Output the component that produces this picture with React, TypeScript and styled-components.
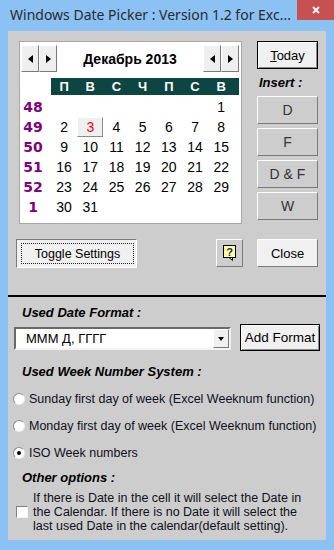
import React from "react";
import styled, { createGlobalStyle } from "styled-components";

const GlobalStyle = createGlobalStyle`
  body {
    margin: 0;
    font-family: "Liberation Sans", Arial, sans-serif;
  }
`;

const Window = styled.div`
  width: 334px;
  height: 550px;
  background: #8bc1f3;
  display: flex;
  flex-direction: column;
  box-sizing: border-box;
`;

const TitleBar = styled.div`
  height: 31px;
  display: flex;
  align-items: flex-start;
`;

const TitleText = styled.div`
  flex: 1;
  padding: 5px 0 0 10px;
  font-family: "Noto Sans", sans-serif;
  font-size: 14px;
  color: #2b2b2b;
  white-space: nowrap;
  overflow: hidden;
`;

const CloseX = styled.div`
  width: 37px;
  height: 20px;
  background: #c75050;
  display: flex;
  align-items: center;
  justify-content: center;
`;

const Client = styled.div`
  flex: 1;
  margin: 0 8px 10px 8px;
  background: #cdcdcd;
  display: flex;
  flex-direction: column;
`;

const TopPane = styled.div`
  padding: 10px 8px 27px 8px;
`;

const TopRow = styled.div`
  display: flex;
  align-items: flex-start;
`;

const CalendarBox = styled.div`
  width: 223px;
  height: 183px;
  box-sizing: border-box;
  margin-left: 3px;
  background: #fff;
  border: 1px solid #a8a8a8;
  padding: 3px 2px 0 1px;
`;

const NavRow = styled.div`
  display: flex;
  align-items: center;
  height: 27px;
`;

const NavPair = styled.div`
  display: flex;
`;

const NavButton = styled.div`
  width: 18px;
  height: 27px;
  box-sizing: border-box;
  background: #efefef;
  border: 1px solid;
  border-color: #fff #7a7a7a #7a7a7a #fff;
  display: flex;
  align-items: center;
  justify-content: center;
`;

const Arrow = styled.span<{ $dir: "left" | "right" }>`
  width: 0;
  height: 0;
  border-top: 4.5px solid transparent;
  border-bottom: 4.5px solid transparent;
  ${({ $dir }) =>
    $dir === "left"
      ? "border-right: 5px solid #000;"
      : "border-left: 5px solid #000;"}
`;

const MonthTitle = styled.div`
  flex: 1;
  text-align: center;
  font-weight: bold;
  font-size: 14px;
  color: #000;
`;

const HeaderBar = styled.div`
  margin: 6px 0 0 30px;
  width: 188px;
  height: 17px;
  background: #0c4542;
  display: grid;
  grid-template-columns: repeat(7, 26.2px);
  align-items: center;
`;

const HeaderCell = styled.div`
  text-align: center;
  color: #fff;
  font-weight: bold;
  font-size: 13px;
`;

const DayGrid = styled.div`
  margin-top: 2px;
  display: grid;
  grid-template-columns: 30px repeat(7, 26.2px);
  grid-auto-rows: 20px;
`;

const WeekNo = styled.div`
  font-family: "DejaVu Sans", sans-serif;
  font-weight: bold;
  font-size: 14px;
  color: #800080;
  text-align: center;
  padding-right: 6px;
  line-height: 20px;
`;

const Day = styled.div<{ $selected?: boolean }>`
  font-size: 14px;
  line-height: 18px;
  text-align: center;
  box-sizing: border-box;
  color: ${({ $selected }) => ($selected ? "#ff0000" : "#000")};
  border: 1px solid;
  border-color: ${({ $selected }) =>
    $selected ? "#fff #8a8a8a #8a8a8a #fff" : "transparent"};
  background: ${({ $selected }) => ($selected ? "#f0f0f0" : "transparent")};
`;

const SideColumn = styled.div`
  width: 61px;
  margin-left: 15px;
  display: flex;
  flex-direction: column;
`;

const Button = styled.div<{ $tone?: "light" | "grey" }>`
  box-sizing: border-box;
  display: flex;
  align-items: center;
  justify-content: center;
  font-size: 12.5px;
  color: ${({ $tone }) => ($tone === "grey" ? "#333" : "#000")};
  background: ${({ $tone }) => ($tone === "grey" ? "#cdcdcd" : "#f0f0f0")};
  border: 1px solid;
  border-color: #fff #7a7a7a #7a7a7a #fff;
`;

const DefaultButton = styled(Button)`
  border: 1px solid #000;
  box-shadow: inset 1px 1px 0 #fff, inset -1px -1px 0 #8a8a8a;
`;

const TodayButton = styled(DefaultButton)`
  height: 28px;
  font-size: 13px;
`;

const InsertLabel = styled.div`
  height: 27px;
  display: flex;
  align-items: center;
  padding-left: 2px;
  font-size: 13px;
  font-weight: bold;
  font-style: italic;
`;

const InsertButton = styled(Button)`
  height: 28px;
  margin-bottom: 4px;
  font-size: 14px;
`;

const ActionRow = styled.div`
  display: flex;
  align-items: flex-start;
  margin-top: 15px;
`;

const ToggleButton = styled.div`
  width: 121px;
  height: 29px;
  box-sizing: border-box;
  background: #f0f0f0;
  border: 1px solid;
  border-color: #7a7a7a #fff #fff #7a7a7a;
  padding: 3px 2px 3px 4px;
  display: flex;
`;

const FocusRect = styled.div`
  flex: 1;
  border: 1px dotted #222;
  display: flex;
  align-items: center;
  justify-content: center;
  font-size: 12.5px;
`;

const HelpButton = styled(Button)`
  width: 27px;
  height: 28px;
  margin-left: auto;
`;

const CloseButton = styled(Button)`
  width: 61px;
  height: 28px;
  margin-left: 14px;
  font-size: 13px;
`;

const Divider = styled.div`
  height: 2px;
  background: #000;
`;

const SettingsPane = styled.div`
  padding: 0 6px 0 6px;
  display: flex;
  flex-direction: column;
`;

const SectionLabel = styled.div<{ $top: number }>`
  margin: ${({ $top }) => $top}px 0 0 8px;
  height: 16px;
  line-height: 16px;
  font-size: 13px;
  font-weight: bold;
  font-style: italic;
`;

const ComboRow = styled.div`
  display: flex;
  align-items: flex-start;
  margin-top: 3px;
`;

const Combo = styled.div`
  width: 217px;
  height: 23px;
  margin-top: 3px;
  box-sizing: border-box;
  background: #fff;
  border: 2px solid;
  border-color: #6a6a6a #f4f4f4 #f4f4f4 #6a6a6a;
  display: flex;
  align-items: center;
  padding: 0 0 0 10px;
  font-size: 13px;
`;

const ComboText = styled.div`
  flex: 1;
`;

const DropButton = styled.div`
  width: 16px;
  height: 19px;
  box-sizing: border-box;
  background: #f0f0f0;
  border: 1px solid;
  border-color: #fff #7a7a7a #7a7a7a #fff;
  display: flex;
  align-items: center;
  justify-content: center;
`;

const DownArrow = styled.span`
  width: 0;
  height: 0;
  border-left: 3.5px solid transparent;
  border-right: 3.5px solid transparent;
  border-top: 4px solid #000;
`;

const AddFormatButton = styled(DefaultButton)`
  width: 80px;
  height: 27px;
  margin-left: 9px;
  font-size: 13.5px;
`;

const RadioList = styled.div`
  margin-top: 5px;
  display: flex;
  flex-direction: column;
`;

const RadioRow = styled.div`
  height: 27px;
  display: flex;
  align-items: center;
  font-size: 12.5px;
  color: #101020;
`;

const RadioDot = styled.span<{ $checked?: boolean }>`
  width: 12px;
  height: 12px;
  box-sizing: border-box;
  border-radius: 50%;
  background: #fff;
  border: 1px solid;
  border-color: #8e8e8e #ececec #ececec #8e8e8e;
  margin: 0 4px 0 -1px;
  display: flex;
  align-items: center;
  justify-content: center;

  &::after {
    content: "";
    width: 4px;
    height: 4px;
    border-radius: 50%;
    background: ${({ $checked }) => ($checked ? "#000" : "transparent")};
  }
`;

const CheckRow = styled.div`
  margin-top: 5px;
  display: flex;
  align-items: center;
`;

const CheckBox = styled.span`
  width: 12px;
  height: 12px;
  box-sizing: border-box;
  flex: none;
  background: #fff;
  border: 1px solid;
  border-color: #808080 #f4f4f4 #f4f4f4 #808080;
  margin: 0 5px 0 2px;
`;

const CheckText = styled.div`
  font-size: 12.5px;
  line-height: 14px;
  color: #101020;
`;

const HelpIcon = () => (
  <svg width="14" height="16" viewBox="0 0 14 16">
    <rect x="0.5" y="0.5" width="12" height="12" fill="#ffff9c" stroke="#000" />
    <polygon points="6,12.5 9.5,12.5 9.5,15.5" fill="#ffff9c" stroke="#000" strokeWidth="1" />
    <text
      x="6.5"
      y="10.5"
      textAnchor="middle"
      fontFamily="Liberation Sans, sans-serif"
      fontWeight="bold"
      fontSize="11"
      fill="#1a1a80"
    >
      ?
    </text>
  </svg>
);

const weekDays = ["П", "В", "С", "Ч", "П", "С", "В"];

const weeks: { no: number; days: (number | null)[] }[] = [
  { no: 48, days: [null, null, null, null, null, null, 1] },
  { no: 49, days: [2, 3, 4, 5, 6, 7, 8] },
  { no: 50, days: [9, 10, 11, 12, 13, 14, 15] },
  { no: 51, days: [16, 17, 18, 19, 20, 21, 22] },
  { no: 52, days: [23, 24, 25, 26, 27, 28, 29] },
  { no: 1, days: [30, 31, null, null, null, null, null] },
];

const weekSystems = [
  "Sunday first day of week (Excel Weeknum function)",
  "Monday first day of week (Excel Weeknum function)",
  "ISO Week numbers",
];

const App: React.FC = () => {
  return (
    <>
      <GlobalStyle />
      <Window>
        <TitleBar>
          <TitleText>Windows Date Picker : Version 1.2 for Exc...</TitleText>
          <CloseX>
            <svg width="8" height="8" viewBox="0 0 8 8">
              <path d="M1 1L7 7M7 1L1 7" stroke="#fff" strokeWidth="1.8" />
            </svg>
          </CloseX>
        </TitleBar>

        <Client>
          <TopPane>
            <TopRow>
              <CalendarBox>
                <NavRow>
                  <NavPair>
                    <NavButton>
                      <Arrow $dir="left" />
                    </NavButton>
                    <NavButton>
                      <Arrow $dir="right" />
                    </NavButton>
                  </NavPair>
                  <MonthTitle>Декабрь 2013</MonthTitle>
                  <NavPair>
                    <NavButton>
                      <Arrow $dir="left" />
                    </NavButton>
                    <NavButton>
                      <Arrow $dir="right" />
                    </NavButton>
                  </NavPair>
                </NavRow>

                <HeaderBar>
                  {weekDays.map((d, i) => (
                    <HeaderCell key={i}>{d}</HeaderCell>
                  ))}
                </HeaderBar>

                <DayGrid>
                  {weeks.map((w) => (
                    <React.Fragment key={w.no}>
                      <WeekNo>{w.no}</WeekNo>
                      {w.days.map((d, i) => (
                        <Day key={i} $selected={d === 3}>
                          {d ?? ""}
                        </Day>
                      ))}
                    </React.Fragment>
                  ))}
                </DayGrid>
              </CalendarBox>

              <SideColumn>
                <TodayButton>
                  <span>
                    <u>T</u>oday
                  </span>
                </TodayButton>
                <InsertLabel>Insert :</InsertLabel>
                <InsertButton $tone="grey">D</InsertButton>
                <InsertButton $tone="grey">F</InsertButton>
                <InsertButton $tone="grey">D &amp; F</InsertButton>
                <InsertButton $tone="grey">W</InsertButton>
              </SideColumn>
            </TopRow>

            <ActionRow>
              <ToggleButton>
                <FocusRect>Toggle Settings</FocusRect>
              </ToggleButton>
              <HelpButton $tone="grey">
                <HelpIcon />
              </HelpButton>
              <CloseButton>Close</CloseButton>
            </ActionRow>
          </TopPane>

          <Divider />

          <SettingsPane>
            <SectionLabel $top={8}>Used Date Format :</SectionLabel>
            <ComboRow>
              <Combo>
                <ComboText>МММ Д, ГГГГ</ComboText>
                <DropButton>
                  <DownArrow />
                </DropButton>
              </Combo>
              <AddFormatButton>Add Format</AddFormatButton>
            </ComboRow>

            <SectionLabel $top={13}>Used Week Number System :</SectionLabel>
            <RadioList>
              {weekSystems.map((s, i) => (
                <RadioRow key={s}>
                  <RadioDot $checked={i === 2} />
                  {s}
                </RadioRow>
              ))}
            </RadioList>

            <SectionLabel $top={4}>Other options :</SectionLabel>
            <CheckRow>
              <CheckBox />
              <CheckText>
                If there is Date in the cell it will select the Date in
                <br />
                the Calendar. If there is no Date it will select the
                <br />
                last used Date in the calendar(default setting).
              </CheckText>
            </CheckRow>
          </SettingsPane>
        </Client>
      </Window>
    </>
  );
};

export default App;
